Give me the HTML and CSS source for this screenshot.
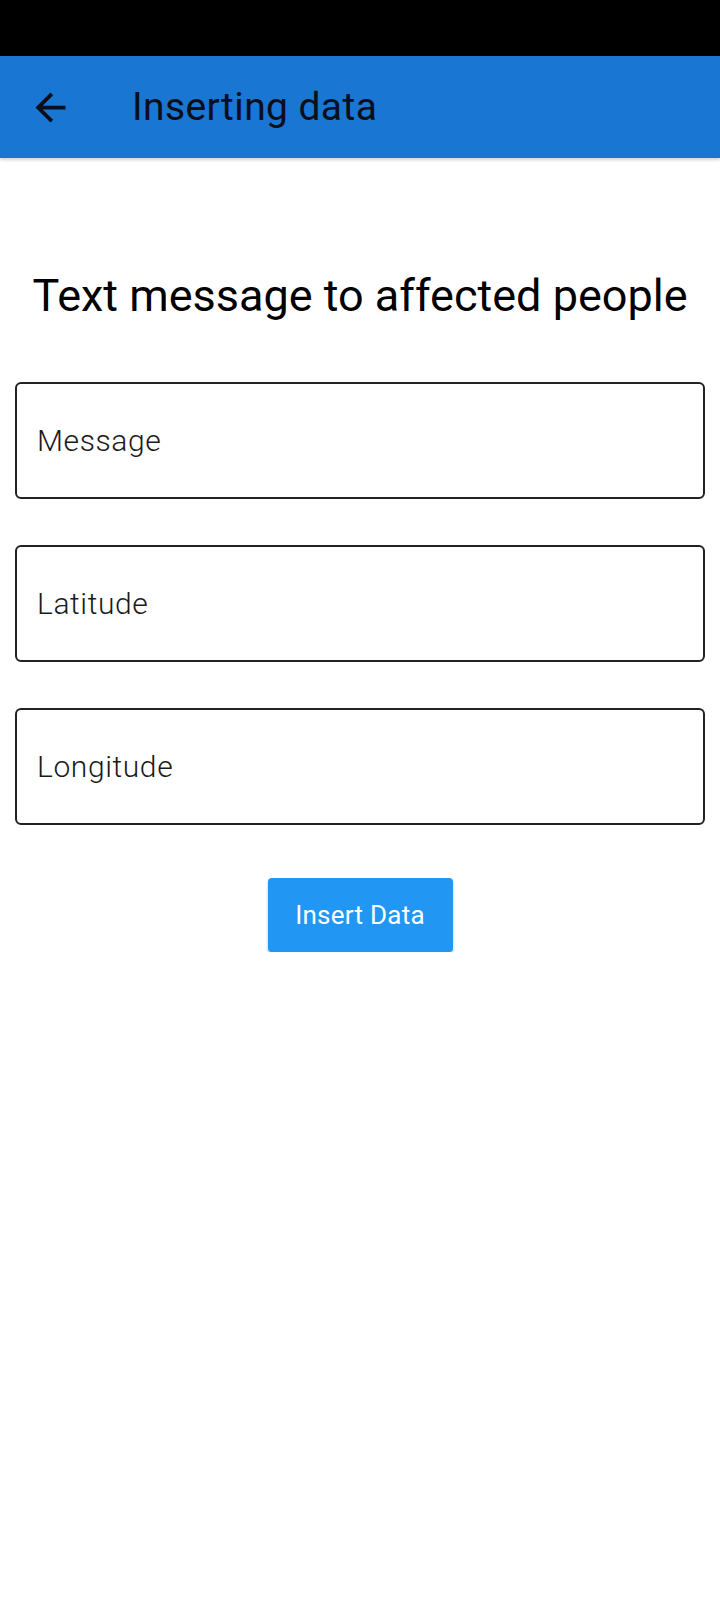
FILE: index.html
```html
<!DOCTYPE html>
<html>
<head>
<meta charset="utf-8">
<link rel="stylesheet" href="styles.css">
</head>
<body>
<div class="status-bar"></div>
<header class="app-bar">
  <svg class="back-icon" viewBox="0 0 24 24"><path d="M20 11H7.83l5.59-5.59L12 4l-8 8 8 8 1.41-1.41L7.83 13H20v-2z"/></svg>
  <h1 class="app-title">Inserting data</h1>
</header>
<main class="content">
  <h2 class="heading">Text message to affected people</h2>
  <div class="fields">
    <div class="field"><span class="label">Message</span></div>
    <div class="field"><span class="label">Latitude</span></div>
    <div class="field"><span class="label">Longitude</span></div>
  </div>
  <div class="actions">
    <button class="btn">Insert Data</button>
  </div>
</main>
</body>
</html>
```

FILE: styles.css
```css
* { box-sizing: border-box; }
html, body {
  margin: 0;
  padding: 0;
  background: #ffffff;
  font-family: Roboto, "Noto Sans", "Liberation Sans", sans-serif;
}
.status-bar {
  height: 56px;
  background: #000000;
}
.app-bar {
  height: 102px;
  background: #1976D2;
  display: flex;
  align-items: center;
  padding-left: 28px;
  box-shadow: 0 2px 3px rgba(0,0,0,0.18);
  position: relative;
}
.back-icon {
  width: 45px;
  height: 45px;
  fill: #0a0f1a;
  flex: none;
}
.app-title {
  margin: 0 0 0 59px;
  font-size: 39px;
  font-weight: 400;
  line-height: 46px;
  letter-spacing: 0.4px;
  color: #0a0f1a;
}
.content {
  padding: 0 15px;
}
.heading {
  margin: 111px 0 0;
  text-align: center;
  font-size: 45px;
  font-weight: 400;
  line-height: 54px;
  color: #000000;
}
.fields {
  margin-top: 59px;
  display: flex;
  flex-direction: column;
  gap: 46px;
}
.field {
  height: 117px;
  border: 2px solid #222222;
  border-radius: 6px;
  display: flex;
  align-items: center;
  padding-left: 20px;
}
.label {
  font-size: 30px;
  line-height: 36px;
  color: #1a1a1a;
  font-weight: 300;
  letter-spacing: 0.6px;
}
.actions {
  margin-top: 53px;
  display: flex;
  justify-content: center;
}
.btn {
  width: 185px;
  height: 74px;
  border: none;
  border-radius: 4px;
  background: #2196F3;
  color: #ffffff;
  font-family: Roboto, "Noto Sans", "Liberation Sans", sans-serif;
  font-size: 26px;
  font-weight: 400;
  line-height: 30px;
  letter-spacing: 0.25px;
  padding: 0;
  box-shadow: 0 2px 3px rgba(0,0,0,0.25);
}
```
